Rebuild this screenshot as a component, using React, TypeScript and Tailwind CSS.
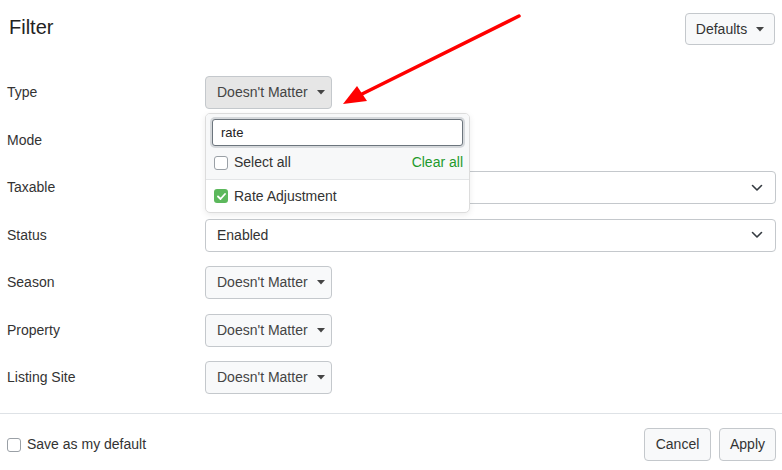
import React, { useState } from 'react';

const Caret = () => (
  <svg width="8" height="5" viewBox="0 0 8 5" className="ml-[9px]">
    <path d="M0 0 L8 0 L4 4.5 Z" fill="#444" />
  </svg>
);

const Chevron = () => (
  <svg width="12" height="8" viewBox="0 0 12 8" fill="none">
    <path d="M1.5 1.5 L6 6 L10.5 1.5" stroke="#343a40" strokeWidth="1.6" strokeLinecap="round" strokeLinejoin="round" />
  </svg>
);

function DropButton({ active = false }: { active?: boolean }) {
  return (
    <button
      className={`h-[33px] w-[127px] flex items-center pl-[11px] rounded-[4px] border border-[#c4c8cc] text-[14px] text-[#444] ${
        active ? 'bg-[#e6e6e6]' : 'bg-[#f8f9fa]'
      }`}
    >
      Doesn't Matter
      <Caret />
    </button>
  );
}

function SelectBox({ value }: { value: string }) {
  return (
    <div className="h-[33px] flex items-center justify-between pl-[11px] pr-[12px] rounded-[4px] border border-[#c4c8cc] bg-white text-[14px] text-[#333]">
      <span>{value}</span>
      <Chevron />
    </div>
  );
}

export default function App() {
  const [search, setSearch] = useState('rate');
  const [saveDefault, setSaveDefault] = useState(false);

  const rows: { label: string; control: React.ReactNode }[] = [
    { label: 'Type', control: <DropButton active /> },
    { label: 'Mode', control: <DropButton /> },
    { label: 'Taxable', control: <SelectBox value="" /> },
    { label: 'Status', control: <SelectBox value="Enabled" /> },
    { label: 'Season', control: <DropButton /> },
    { label: 'Property', control: <DropButton /> },
    { label: 'Listing Site', control: <DropButton /> },
  ];

  return (
    <div className="relative w-[782px] h-[470px] bg-white text-[#333] font-['Liberation_Sans',Arial,sans-serif] overflow-hidden">
      {/* Header */}
      <div className="flex items-start justify-between pl-[9px] pr-[7px] pt-[13px]">
        <h1 className="text-[20px] leading-[28px] text-[#222]">Filter</h1>
        <button className="h-[32px] w-[90px] flex items-center justify-center rounded-[4px] border border-[#c4c8cc] bg-[#f8f9fa] text-[14px] text-[#333]">
          Defaults
          <Caret />
        </button>
      </div>

      {/* Rows */}
      <div className="mt-[31px] grid grid-cols-[198px_1fr] gap-y-[14.5px] pl-[7px] pr-[6px]">
        {rows.map((r) => (
          <React.Fragment key={r.label}>
            <div className="h-[33px] flex items-center text-[14px] text-[#333]">{r.label}</div>
            <div>{r.control}</div>
          </React.Fragment>
        ))}
      </div>

      {/* Footer */}
      <div className="mt-[19px] border-t border-[#dee2e6] flex items-center justify-between pl-[7px] pr-[6px] pt-[14px]">
        <label className="flex items-center gap-[6px] text-[14px] text-[#333]">
          <span
            onClick={() => setSaveDefault(!saveDefault)}
            className="w-[14px] h-[14px] rounded-[3px] border border-[#9aa0a6] bg-white"
          />
          Save as my default
        </label>
        <div className="flex gap-[8px]">
          <button className="h-[33px] w-[67px] rounded-[4px] border border-[#c4c8cc] bg-[#f8f9fa] text-[14px] text-[#333]">
            Cancel
          </button>
          <button className="h-[33px] w-[57px] rounded-[4px] border border-[#c4c8cc] bg-[#f8f9fa] text-[14px] text-[#333]">
            Apply
          </button>
        </div>
      </div>

      {/* Open dropdown menu */}
      <div className="absolute left-[205px] top-[113px] w-[265px] rounded-[5px] border border-[#dcdcdc] bg-white shadow-[0_2px_6px_rgba(0,0,0,0.08)] overflow-hidden">
        <div className="bg-[#f7f8f9] border-b border-[#e3e5e7] px-[6px] pt-[5px]">
          <input
            value={search}
            onChange={(e) => setSearch(e.target.value)}
            className="w-full h-[27px] rounded-[3px] border border-[#6c757d] bg-white pl-[8px] text-[13px] text-[#222] outline-none shadow-[0_0_0_2px_#d5d8db]"
          />
          <div className="h-[33px] flex items-center justify-between pl-[2px]">
            <div className="flex items-center gap-[6px] text-[14px] text-[#333]">
              <span className="w-[14px] h-[14px] rounded-[3px] border border-[#9aa0a6] bg-white" />
              Select all
            </div>
            <span className="text-[14px] text-[#1e9a2c]">Clear all</span>
          </div>
        </div>
        <div className="h-[32px] flex items-center gap-[6px] pl-[8px] text-[14px] text-[#333]">
          <span className="w-[14px] h-[14px] rounded-[3px] bg-[#5cb85c] flex items-center justify-center">
            <svg width="9" height="7" viewBox="0 0 9 7" fill="none">
              <path d="M1 3.5 L3.5 6 L8 1" stroke="white" strokeWidth="1.8" strokeLinecap="round" strokeLinejoin="round" />
            </svg>
          </span>
          Rate Adjustment
        </div>
      </div>

      {/* Annotation arrow */}
      <svg className="absolute left-0 top-0 pointer-events-none" width="782" height="470">
        <line x1="519" y1="16" x2="358" y2="96" stroke="#ff0000" strokeWidth="3.5" strokeLinecap="round" />
        <polygon points="343,104 357,86 367,101" fill="#ff0000" />
      </svg>
    </div>
  );
}
